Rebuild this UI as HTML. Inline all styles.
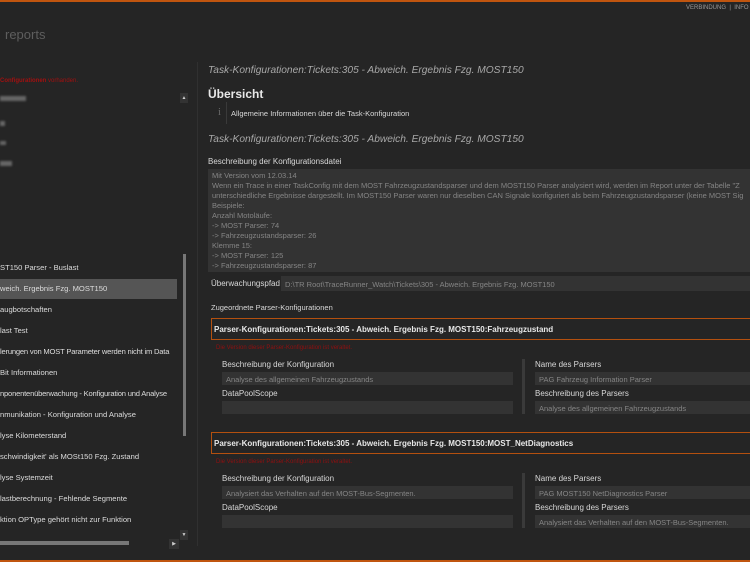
<!DOCTYPE html>
<html><head><meta charset="utf-8"><style>
*{margin:0;padding:0;box-sizing:border-box}
body{width:750px;height:562px;background:#252525;overflow:hidden;position:relative;font-family:"Liberation Sans",sans-serif;color:#d8d8d8}
.a{position:absolute;white-space:nowrap}
.s{font-size:8px}
.li{position:absolute;left:0;font-size:7.6px;color:#dcdcdc;width:177px;height:20px;line-height:20px;white-space:nowrap;overflow:hidden}
.box{position:absolute;background:#333}
.it{font-style:italic;color:#a8a8a8;font-size:10.2px}
.g{color:#858585}
</style></head><body>
<div class="a" style="left:0;top:0;width:750px;height:2px;background:#c0550f"></div>
<div class="a" style="left:0;top:560px;width:750px;height:2px;background:#c0550f"></div>
<div class="a" style="left:686px;top:5px;font-size:6px;color:#999">VERBINDUNG &nbsp;|&nbsp; INFO</div>
<div class="a" style="left:5px;top:27px;font-size:13px;color:#5e5e5e">reports</div>
<div class="a" style="left:197px;top:62px;width:1px;height:484px;background:#303030"></div>
<div class="a" style="left:0;top:78px;font-size:6px;color:#a01010"><b>Configurationen</b> vorhanden.</div>
<div class="a" style="left:0;top:96px;width:26px;height:5px;background:#666;filter:blur(1px)"></div>
<div class="a" style="left:0;top:121px;width:5px;height:5px;background:#666;filter:blur(1px)"></div>
<div class="a" style="left:0;top:141px;width:6px;height:4px;background:#666;filter:blur(1px)"></div>
<div class="a" style="left:0;top:161px;width:12px;height:5px;background:#666;filter:blur(1px)"></div>
<div class="a" style="left:180px;top:93px;width:8px;height:10px;background:#333;color:#ccc;font-size:5px;text-align:center;line-height:10px">▲</div>
<div class="a" style="left:183px;top:254px;width:3px;height:182px;background:#777"></div>
<div class="a" style="left:180px;top:530px;width:8px;height:10px;background:#333;color:#ccc;font-size:5px;text-align:center;line-height:10px">▼</div>
<div class="a" style="left:0;top:541px;width:129px;height:4px;background:#777"></div>
<div class="a" style="left:169px;top:539px;width:10px;height:10px;background:#333;color:#ccc;font-size:5px;text-align:center;line-height:10px">▶</div>
<div class="li" style="top:258px">ST150 Parser - Buslast</div>
<div class="li" style="top:279px;background:#555">weich. Ergebnis Fzg. MOST150</div>
<div class="li" style="top:300px">augbotschaften</div>
<div class="li" style="top:321px">last Test</div>
<div class="li" style="top:342px;letter-spacing:-0.2px">lerungen von MOST Parameter werden nicht im Data</div>
<div class="li" style="top:363px">Bit Informationen</div>
<div class="li" style="top:384px;letter-spacing:-0.2px">nponentenüberwachung - Konfiguration und Analyse</div>
<div class="li" style="top:405px">nmunikation - Konfiguration und Analyse</div>
<div class="li" style="top:426px">lyse Kilometerstand</div>
<div class="li" style="top:447px">schwindigkeit' als MOSt150 Fzg. Zustand</div>
<div class="li" style="top:468px">lyse Systemzeit</div>
<div class="li" style="top:489px">lastberechnung - Fehlende Segmente</div>
<div class="li" style="top:510px">ktion OPType gehört nicht zur Funktion</div>

<div class="a it" style="left:208px;top:65px">Task-Konfigurationen:Tickets:305 - Abweich. Ergebnis Fzg. MOST150</div>
<div class="a" style="left:208px;top:87px;font-size:12px;font-weight:bold;color:#e8e8e8">Übersicht</div>
<div class="a" style="left:218px;top:106px;font-size:11px;color:#666;font-family:'Liberation Serif',serif">i</div>
<div class="a" style="left:226px;top:102px;width:1px;height:22px;background:#3a3a3a"></div>
<div class="a s" style="left:231px;top:109px;font-size:7.5px">Allgemeine Informationen über die Task-Konfiguration</div>
<div class="a it" style="left:208px;top:134px">Task-Konfigurationen:Tickets:305 - Abweich. Ergebnis Fzg. MOST150</div>
<div class="a s" style="left:208px;top:157px">Beschreibung der Konfigurationsdatei</div>
<div class="box" style="left:208px;top:169px;width:542px;height:103px"></div>
<div class="a g" style="left:212px;top:171px;font-size:7.5px;line-height:10px">Mit Version vom 12.03.14<br>Wenn ein Trace in einer TaskConfig mit dem MOST Fahrzeugzustandsparser und dem MOST150 Parser analysiert wird, werden im Report unter der Tabelle "Z<br>unterschiedliche Ergebnisse dargestellt. Im MOST150 Parser waren nur dieselben CAN Signale konfiguriert als beim Fahrzeugzustandsparser (keine MOST Sig<br>Beispiele:<br>Anzahl Motoläufe:<br>-&gt; MOST Parser: 74<br>-&gt; Fahrzeugzustandsparser: 26<br>Klemme 15:<br>-&gt; MOST Parser: 125<br>-&gt; Fahrzeugzustandsparser: 87</div>
<div class="a s" style="left:211px;top:279px">Überwachungspfad</div>
<div class="box" style="left:281px;top:276px;width:469px;height:15px"></div>
<div class="a g" style="left:285px;top:280px;font-size:7.5px">D:\TR Root\TraceRunner_Watch\Tickets\305 - Abweich. Ergebnis Fzg. MOST150</div>
<div class="a s" style="left:211px;top:303px;font-size:7.5px">Zugeordnete Parser-Konfigurationen</div>

<div class="a" style="left:211px;top:318px;width:540px;height:22px;border:1px solid #b4500f;border-right:none"></div>
<div class="a" style="left:214px;top:325px;font-size:8px;font-weight:bold;color:#e8e8e8">Parser-Konfigurationen:Tickets:305 - Abweich. Ergebnis Fzg. MOST150:Fahrzeugzustand</div>
<div class="a" style="left:216px;top:345px;font-size:6px;color:#901010">Die Version dieser Parser-Konfiguration ist veraltet.</div>
<div class="a s" style="left:222px;top:360px">Beschreibung der Konfiguration</div>
<div class="box" style="left:222px;top:372px;width:291px;height:13px"></div>
<div class="a g" style="left:226px;top:375px;font-size:7.5px">Analyse des allgemeinen Fahrzeugzustands</div>
<div class="a s" style="left:222px;top:389px">DataPoolScope</div>
<div class="box" style="left:222px;top:401px;width:291px;height:13px"></div>
<div class="a" style="left:522px;top:359px;width:3px;height:55px;background:#3a3a3a"></div>
<div class="a s" style="left:535px;top:360px">Name des Parsers</div>
<div class="box" style="left:535px;top:372px;width:215px;height:13px"></div>
<div class="a g" style="left:539px;top:375px;font-size:7.5px">PAG Fahrzeug Information Parser</div>
<div class="a s" style="left:535px;top:389px">Beschreibung des Parsers</div>
<div class="box" style="left:535px;top:401px;width:215px;height:13px"></div>
<div class="a g" style="left:539px;top:404px;font-size:7.5px">Analyse des allgemeinen Fahrzeugzustands</div>

<div class="a" style="left:211px;top:432px;width:540px;height:22px;border:1px solid #b4500f;border-right:none"></div>
<div class="a" style="left:214px;top:439px;font-size:8px;font-weight:bold;color:#e8e8e8">Parser-Konfigurationen:Tickets:305 - Abweich. Ergebnis Fzg. MOST150:MOST_NetDiagnostics</div>
<div class="a" style="left:216px;top:459px;font-size:6px;color:#901010">Die Version dieser Parser-Konfiguration ist veraltet.</div>
<div class="a s" style="left:222px;top:474px">Beschreibung der Konfiguration</div>
<div class="box" style="left:222px;top:486px;width:291px;height:13px"></div>
<div class="a g" style="left:226px;top:489px;font-size:7.5px">Analysiert das Verhalten auf den MOST-Bus-Segmenten.</div>
<div class="a s" style="left:222px;top:503px">DataPoolScope</div>
<div class="box" style="left:222px;top:515px;width:291px;height:13px"></div>
<div class="a" style="left:522px;top:473px;width:3px;height:55px;background:#3a3a3a"></div>
<div class="a s" style="left:535px;top:474px">Name des Parsers</div>
<div class="box" style="left:535px;top:486px;width:215px;height:13px"></div>
<div class="a g" style="left:539px;top:489px;font-size:7.5px">PAG MOST150 NetDiagnostics Parser</div>
<div class="a s" style="left:535px;top:503px">Beschreibung des Parsers</div>
<div class="box" style="left:535px;top:515px;width:215px;height:13px"></div>
<div class="a g" style="left:539px;top:518px;font-size:7.5px">Analysiert das Verhalten auf den MOST-Bus-Segmenten.</div>
</body></html>
